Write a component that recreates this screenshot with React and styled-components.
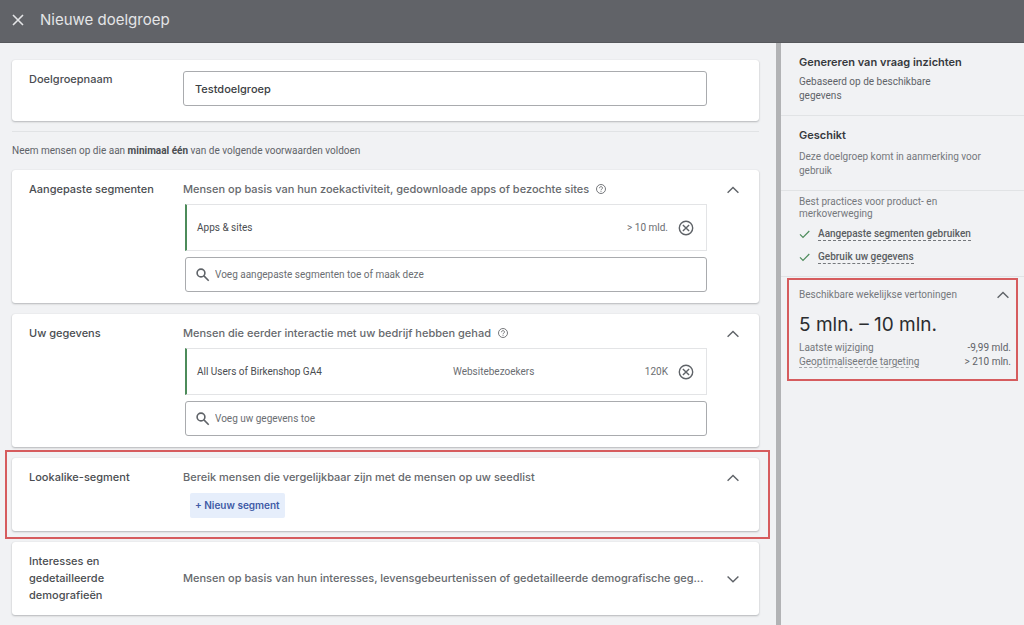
import React from "react";
import styled, { createGlobalStyle } from "styled-components";

const heading = `Inter, "Open Sans", sans-serif`;
const body = `Roboto, "Liberation Sans", sans-serif`;

const GlobalStyle = createGlobalStyle`
  *, *::before, *::after { box-sizing: border-box; }
  body { margin: 0; background: #f1f2f4; font: 10px/14px ${body}; color: #5f6368; }
  h1, h2, h3, p, ul, dl, dd { margin: 0; padding: 0; }
  ul { list-style: none; }
  button { border: 0; padding: 0; background: none; color: inherit; font: inherit; cursor: pointer; }
`;

const Page = styled.div`
  display: flex;
  flex-direction: column;
  min-height: 100vh;
`;

const TopBar = styled.header`
  display: flex;
  align-items: center;
  gap: 16px;
  height: 43px;
  padding: 0 12px 2px;
  background: #616368;
  color: #e4e5e7;
  border-bottom: 1px solid #56585c;
`;

const PageTitle = styled.h1`
  font: 400 15px/24px ${heading};
`;

const IconButton = styled.button`
  display: flex;
  align-items: center;
  justify-content: center;
  width: ${(p) => p.$width || 16}px;
  height: ${(p) => p.$height || 16}px;
  flex: none;
`;

const Columns = styled.div`
  display: flex;
  flex: 1;
`;

const Main = styled.main`
  flex: 1;
  min-width: 0;
  padding: 17px 17px 9px 12px;
`;

const Card = styled.section`
  position: relative;
  display: grid;
  grid-template-columns: 154px minmax(0, 1fr) 42px;
  align-items: ${(p) => (p.$centered ? "center" : "start")};
  padding: 11px 5px ${(p) => p.$bottom || 11}px 17px;
  background: #fff;
  border-radius: 3px;
  box-shadow: 0 1px 2px rgba(60, 64, 67, 0.32), 0 0 1px rgba(60, 64, 67, 0.14);
  & + & { margin-top: 11px; }
`;

const CardLabel = styled.h2`
  padding-right: 20px;
  font: 500 11px/17px ${heading};
  color: #4a4d51;
`;

const CardSummary = styled.p`
  display: flex;
  align-items: center;
  gap: 6px;
  font: 500 11px/17px ${heading};
  color: #66696d;
`;

const Ellipsis = styled.span`
  overflow: hidden;
  text-overflow: ellipsis;
  white-space: nowrap;
`;

const Fields = styled.div`
  padding: 6px 5px 0 2px;
`;

const NameInput = styled.input`
  display: block;
  width: calc(100% - 5px);
  height: 35px;
  padding: 0 11px;
  border: 1px solid #a9abae;
  border-radius: 3px;
  background: #fff;
  color: #3c4043;
  font: 500 11px/17px ${heading};
`;

const SegmentRow = styled.div`
  display: grid;
  grid-template-columns: 4fr 3fr auto;
  align-items: center;
  height: 47px;
  padding: 0 12px 0 10px;
  border: 1px solid #e3e4e6;
  border-left: 2px solid #4c8b5a;
  color: #6b6e72;
`;

const SegmentName = styled.span`
  color: #4a4d51;
`;

const SegmentEnd = styled.span`
  display: flex;
  align-items: center;
  gap: 10px;
`;

const SearchBox = styled.label`
  display: flex;
  align-items: center;
  gap: 5px;
  height: 35px;
  margin-top: 6px;
  padding: 0 10px;
  border: 1px solid #a9abae;
  border-radius: 3px;
  color: #5f6368;
`;

const SearchInput = styled.input`
  flex: 1;
  min-width: 0;
  border: 0;
  padding: 0;
  background: none;
  font: 10px/14px ${body};
  color: #3c4043;
  &::placeholder { color: #6b6e72; opacity: 1; }
`;

const Rule = styled.hr`
  height: 1px;
  margin: 10px 0 12px;
  border: 0;
  background: #e1e3e5;
`;

const Condition = styled.p`
  margin-bottom: 12px;
  strong { font-weight: 700; color: #4a4d51; }
`;

const NewSegment = styled.button`
  height: 25px;
  margin: 7px 0 0 7px;
  padding: 0 5px;
  border-radius: 2px;
  background: #e6eefb;
  color: #3f5ba6;
  font: 600 10px/17px ${heading};
`;

const Highlight = styled.div`
  position: absolute;
  inset: ${(p) => p.$inset};
  border: 2px solid #d65c5e;
  pointer-events: none;
`;

const Aside = styled.aside`
  flex: 0 0 248px;
  border-left: 5px solid #b2b3b5;
`;

const Panel = styled.section`
  position: relative;
  padding: ${(p) => p.$pad};
  & + & { border-top: 1px solid #e1e3e5; }
`;

const PanelTitle = styled.h2`
  font: 600 11px/16px ${heading};
  color: #36393d;
`;

const PanelText = styled.p`
  max-width: ${(p) => p.$max || 200}px;
  margin-top: ${(p) => p.$top || 0}px;
  line-height: ${(p) => p.$line || 14}px;
  color: ${(p) => (p.$dark ? "#5f6368" : "#75787c")};
`;

const Practices = styled.ul`
  margin-top: 3px;
`;

const Practice = styled.li`
  display: flex;
  align-items: center;
  gap: 8px;
  height: 23px;
`;

const DottedLink = styled.a`
  border-bottom: 1px dashed ${(p) => (p.$light ? "#a5a8ab" : "#75787c")};
  color: ${(p) => (p.$light ? "#75787c" : "#5a5d61")};
  font-weight: ${(p) => (p.$light ? 400 : 500)};
  line-height: 12px;
  text-decoration: none;
`;

const ImpressionHead = styled.div`
  display: flex;
  align-items: center;
  justify-content: space-between;
  color: #75787c;
`;

const Figure = styled.p`
  margin: 10px 0 4px;
  font: 400 19px/24px ${heading};
  color: #2b2d30;
`;

const Stat = styled.div`
  display: flex;
  justify-content: space-between;
  dt { color: #75787c; }
  dd { color: #5f6368; }
`;

const Stroke = ({ size = 16, width = 1, d, color = "currentColor", children }) => (
  <svg width={size} height={size} viewBox={`0 0 ${size} ${size}`} fill="none" stroke={color} strokeWidth={width} aria-hidden="true">
    {d && <path d={d} />}
    {children}
  </svg>
);

const Chevron = ({ down }) => (
  <Stroke size={14} width={1.4} d={down ? "M1.6 4.4 7 9.8 12.4 4.4" : "M1.6 9.8 7 4.4 12.4 9.8"} color="#5f6368" />
);

const Help = () => (
  <Stroke size={12} width={0.9} color="#66696d">
    <circle cx="6" cy="5" r="4.5" />
    <path d="M4.5 4.2c0-2.1 3-2 3-.2 0 1.1-1.5 1.2-1.5 2.2M6 6.9v.9" />
  </Stroke>
);

const Remove = () => (
  <Stroke size={16} width={1.4} color="#5f6368">
    <circle cx="8" cy="8" r="6.7" />
    <path d="M4.9 4.9l6.2 6.2M11.1 4.9l-6.2 6.2" />
  </Stroke>
);

const Magnifier = () => (
  <Stroke size={14} width={1.6} color="#5f6368">
    <circle cx="5" cy="5" r="3.9" />
    <path d="M7.9 7.9l4.8 4.8" />
  </Stroke>
);

const Toggle = ({ down }) => (
  <IconButton $width={42} $height={17} aria-label={down ? "Uitvouwen" : "Samenvouwen"}>
    <Chevron down={down} />
  </IconButton>
);

const SegmentCard = ({ title, summary, name, kind, amount, placeholder }) => (
  <Card>
    <CardLabel>{title}</CardLabel>
    <div>
      <CardSummary>{summary}<Help /></CardSummary>
      <Fields>
        <SegmentRow>
          <SegmentName>{name}</SegmentName>
          <span>{kind}</span>
          <SegmentEnd>
            {amount}
            <IconButton aria-label="Verwijderen"><Remove /></IconButton>
          </SegmentEnd>
        </SegmentRow>
        <SearchBox>
          <Magnifier />
          <SearchInput placeholder={placeholder} aria-label={placeholder} />
        </SearchBox>
      </Fields>
    </div>
    <Toggle />
  </Card>
);

export default function App() {
  return (
    <Page>
      <GlobalStyle />
      <TopBar>
        <IconButton $width={12} aria-label="Sluiten">
          <Stroke size={12} width={1.6} d="M1 1l10 10M11 1l-10 10" />
        </IconButton>
        <PageTitle>Nieuwe doelgroep</PageTitle>
      </TopBar>
      <Columns>
        <Main>
          <Card $bottom={15}>
            <CardLabel as="label" htmlFor="name">Doelgroepnaam</CardLabel>
            <NameInput id="name" defaultValue="Testdoelgroep" />
          </Card>
          <Rule />
          <Condition>
            Neem mensen op die aan <strong>minimaal één</strong> van de volgende voorwaarden voldoen
          </Condition>
          <SegmentCard
            title="Aangepaste segmenten"
            summary="Mensen op basis van hun zoekactiviteit, gedownloade apps of bezochte sites"
            name="Apps & sites"
            amount="> 10 mld."
            placeholder="Voeg aangepaste segmenten toe of maak deze"
          />
          <SegmentCard
            title="Uw gegevens"
            summary="Mensen die eerder interactie met uw bedrijf hebben gehad"
            name="All Users of Birkenshop GA4"
            kind="Websitebezoekers"
            amount="120K"
            placeholder="Voeg uw gegevens toe"
          />
          <Card $bottom={13}>
            <CardLabel>Lookalike-segment</CardLabel>
            <div>
              <CardSummary>Bereik mensen die vergelijkbaar zijn met de mensen op uw seedlist</CardSummary>
              <NewSegment>+ Nieuw segment</NewSegment>
            </div>
            <Toggle />
            <Highlight $inset="-8px -11px -8px -7px" />
          </Card>
          <Card $centered>
            <CardLabel>Interesses en gedetailleerde demografieën</CardLabel>
            <CardSummary>
              <Ellipsis>Mensen op basis van hun interesses, levensgebeurtenissen of gedetailleerde demografische geg...</Ellipsis>
            </CardSummary>
            <Toggle down />
          </Card>
        </Main>
        <Aside>
          <Panel $pad="11px 18px 12px">
            <PanelTitle>Genereren van vraag inzichten</PanelTitle>
            <PanelText $dark $top={5} $max={150}>Gebaseerd op de beschikbare gegevens</PanelText>
          </Panel>
          <Panel $pad="11px 18px 12px">
            <PanelTitle>Geschikt</PanelTitle>
            <PanelText $top={7}>Deze doelgroep komt in aanmerking voor gebruik</PanelText>
          </Panel>
          <Panel $pad="5px 18px 7px">
            <PanelText $max={160} $line={12}>Best practices voor product- en merkoverweging</PanelText>
            <Practices>
              {["Aangepaste segmenten gebruiken", "Gebruik uw gegevens"].map((text) => (
                <Practice key={text}>
                  <Stroke size={11} width={1.2} d="M1 5.3 4 8.3 10.3 2" color="#4c8b5a" />
                  <DottedLink href="#">{text}</DottedLink>
                </Practice>
              ))}
            </Practices>
          </Panel>
          <Panel $pad="10px 13px 12px 18px">
            <ImpressionHead>
              Beschikbare wekelijkse vertoningen
              <IconButton aria-label="Samenvouwen"><Chevron /></IconButton>
            </ImpressionHead>
            <Figure>5 mln. – 10 mln.</Figure>
            <dl>
              <Stat><dt>Laatste wijziging</dt><dd>-9,99 mld.</dd></Stat>
              <Stat><dt><DottedLink $light href="#">Geoptimaliseerde targeting</DottedLink></dt><dd>&gt; 210 mln.</dd></Stat>
            </dl>
            <Highlight $inset="1px 6px 0 6px" />
          </Panel>
        </Aside>
      </Columns>
    </Page>
  );
}
